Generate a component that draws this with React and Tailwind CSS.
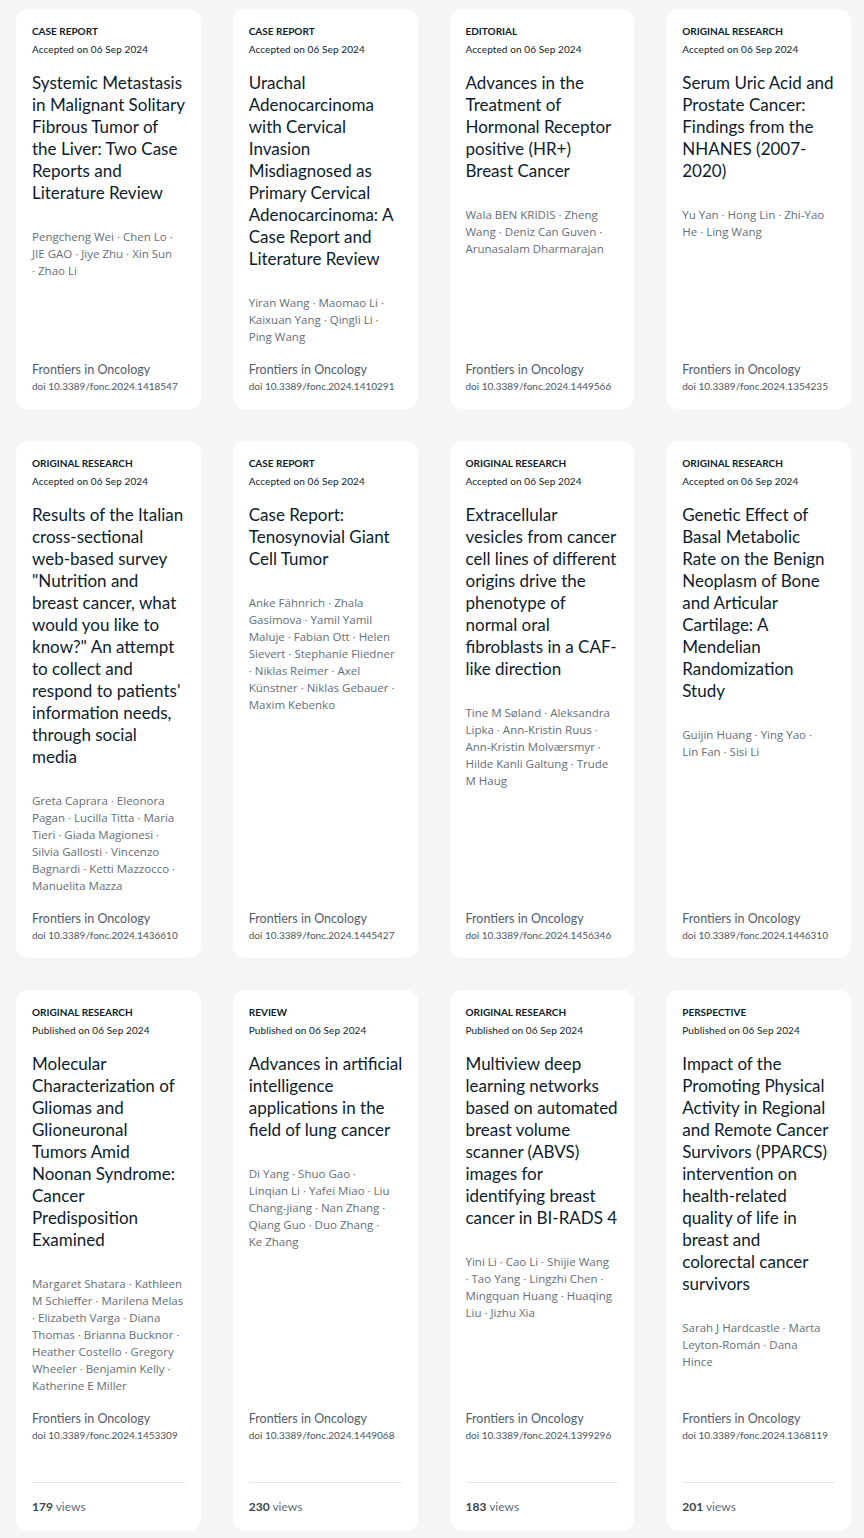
import React from 'react';

const cards = [
    {
        type: 'Case Report', date: 'Accepted on 06 Sep 2024',
        title: ['Systemic Metastasis', 'in Malignant Solitary', 'Fibrous Tumor of', 'the Liver: Two Case', 'Reports and', 'Literature Review'],
        authors: ['Pengcheng Wei · Chen Lo ·', 'JIE GAO · Jiye Zhu · Xin Sun', '· Zhao Li'],
        doi: '10.3389/fonc.2024.1418547'
    },
    {
        type: 'Case Report', date: 'Accepted on 06 Sep 2024',
        title: ['Urachal', 'Adenocarcinoma', 'with Cervical', 'Invasion', 'Misdiagnosed as', 'Primary Cervical', 'Adenocarcinoma: A', 'Case Report and', 'Literature Review'],
        authors: ['Yiran Wang · Maomao Li ·', 'Kaixuan Yang · Qingli Li ·', 'Ping Wang'],
        doi: '10.3389/fonc.2024.1410291'
    },
    {
        type: 'Editorial', date: 'Accepted on 06 Sep 2024',
        title: ['Advances in the', 'Treatment of', 'Hormonal Receptor', 'positive (HR+)', 'Breast Cancer'],
        authors: ['Wala BEN KRIDIS · Zheng', 'Wang · Deniz Can Guven ·', 'Arunasalam Dharmarajan'],
        doi: '10.3389/fonc.2024.1449566'
    },
    {
        type: 'Original Research', date: 'Accepted on 06 Sep 2024',
        title: ['Serum Uric Acid and', 'Prostate Cancer:', 'Findings from the', 'NHANES (2007-', '2020)'],
        authors: ['Yu Yan · Hong Lin · Zhi-Yao', 'He · Ling Wang'],
        doi: '10.3389/fonc.2024.1354235'
    },
    {
        type: 'Original Research', date: 'Accepted on 06 Sep 2024',
        title: ['Results of the Italian', 'cross-sectional', 'web-based survey', '"Nutrition and', 'breast cancer, what', 'would you like to', 'know?" An attempt', 'to collect and', "respond to patients'", 'information needs,', 'through social', 'media'],
        authors: ['Greta Caprara · Eleonora', 'Pagan · Lucilla Titta · Maria', 'Tieri · Giada Magionesi ·', 'Silvia Gallosti · Vincenzo', 'Bagnardi · Ketti Mazzocco ·', 'Manuelita Mazza'],
        doi: '10.3389/fonc.2024.1436610'
    },
    {
        type: 'Case Report', date: 'Accepted on 06 Sep 2024',
        title: ['Case Report:', 'Tenosynovial Giant', 'Cell Tumor'],
        authors: ['Anke Fähnrich · Zhala', 'Gasimova · Yamil Yamil', 'Maluje · Fabian Ott · Helen', 'Sievert · Stephanie Fliedner', '· Niklas Reimer · Axel', 'Künstner · Niklas Gebauer ·', 'Maxim Kebenko'],
        doi: '10.3389/fonc.2024.1445427'
    },
    {
        type: 'Original Research', date: 'Accepted on 06 Sep 2024',
        title: ['Extracellular', 'vesicles from cancer', 'cell lines of different', 'origins drive the', 'phenotype of', 'normal oral', 'fibroblasts in a CAF-', 'like direction'],
        authors: ['Tine M Søland · Aleksandra', 'Lipka · Ann-Kristin Ruus ·', 'Ann-Kristin Molværsmyr ·', 'Hilde Kanli Galtung · Trude', 'M Haug'],
        doi: '10.3389/fonc.2024.1456346'
    },
    {
        type: 'Original Research', date: 'Accepted on 06 Sep 2024',
        title: ['Genetic Effect of', 'Basal Metabolic', 'Rate on the Benign', 'Neoplasm of Bone', 'and Articular', 'Cartilage: A', 'Mendelian', 'Randomization', 'Study'],
        authors: ['Guijin Huang · Ying Yao ·', 'Lin Fan · Sisi Li'],
        doi: '10.3389/fonc.2024.1446310'
    },
    {
        type: 'Original Research', date: 'Published on 06 Sep 2024',
        title: ['Molecular', 'Characterization of', 'Gliomas and', 'Glioneuronal', 'Tumors Amid', 'Noonan Syndrome:', 'Cancer', 'Predisposition', 'Examined'],
        authors: ['Margaret Shatara · Kathleen', 'M Schieffer · Marilena Melas', '· Elizabeth Varga · Diana', 'Thomas · Brianna Bucknor ·', 'Heather Costello · Gregory', 'Wheeler · Benjamin Kelly ·', 'Katherine E Miller'],
        doi: '10.3389/fonc.2024.1453309', views: 179
    },
    {
        type: 'Review', date: 'Published on 06 Sep 2024',
        title: ['Advances in artificial', 'intelligence', 'applications in the', 'field of lung cancer'],
        authors: ['Di Yang · Shuo Gao ·', 'Linqian Li · Yafei Miao · Liu', 'Chang-jiang · Nan Zhang ·', 'Qiang Guo · Duo Zhang ·', 'Ke Zhang'],
        doi: '10.3389/fonc.2024.1449068', views: 230
    },
    {
        type: 'Original Research', date: 'Published on 06 Sep 2024',
        title: ['Multiview deep', 'learning networks', 'based on automated', 'breast volume', 'scanner (ABVS)', 'images for', 'identifying breast', 'cancer in BI-RADS 4'],
        authors: ['Yini Li · Cao Li · Shijie Wang', '· Tao Yang · Lingzhi Chen ·', 'Mingquan Huang · Huaqing', 'Liu · Jizhu Xia'],
        doi: '10.3389/fonc.2024.1399296', views: 183
    },
    {
        type: 'Perspective', date: 'Published on 06 Sep 2024',
        title: ['Impact of the', 'Promoting Physical', 'Activity in Regional', 'and Remote Cancer', 'Survivors (PPARCS)', 'intervention on', 'health-related', 'quality of life in', 'breast and', 'colorectal cancer', 'survivors'],
        authors: ['Sarah J Hardcastle · Marta', 'Leyton-Román · Dana', 'Hince'],
        doi: '10.3389/fonc.2024.1368119', views: 201
    }
];

const ArticleCard = ({ card }) => (
    <div className="flex flex-col rounded-xl bg-white px-4 pt-4 pb-4">
        <p className="text-[10px] font-bold uppercase leading-3 text-[#0c1c2c]">{card.type}</p>
        <p className="mt-[5px] text-[10px] leading-[14px] tracking-[0.01em] text-[#0c1c2c]">{card.date}</p>

        <h3 className="mt-4 text-[17px] leading-[22px] text-[#0c1c2c]">
            {card.title.map((line, i) => (
                <span key={i} className="block whitespace-nowrap">{line}</span>
            ))}
        </h3>

        <p className="mt-6 font-['Open_Sans',sans-serif] text-[11.5px] leading-[17px] text-[#656e78]">
            {card.authors.map((line, i) => (
                <span key={i} className="block whitespace-nowrap">{line}</span>
            ))}
        </p>

        <div className="mt-auto pt-[17px]">
            <p className="text-[12.5px] leading-4 text-[#515d6b]">Frontiers in Oncology</p>
            <p className="mt-px text-[10px] leading-[14px] text-[#4a5563]">doi {card.doi}</p>
        </div>

        {card.views && (
            <div className="mt-10 border-t border-[#e6e6e6] pt-4 text-[12px] leading-4 text-[#5e6b78]">
                <span className="font-bold text-[#3a4450]">{card.views}</span> views
            </div>
        )}
    </div>
);

const App = () => {
    return (
        <div className="min-h-screen bg-[#f5f5f5] pt-[9px] pl-4 pr-[13px] font-['Lato',sans-serif]">
            <div className="grid grid-cols-4 gap-8">
                {cards.map((card, i) => (
                    <ArticleCard key={i} card={card} />
                ))}
            </div>
        </div>
    );
};

export default App;
